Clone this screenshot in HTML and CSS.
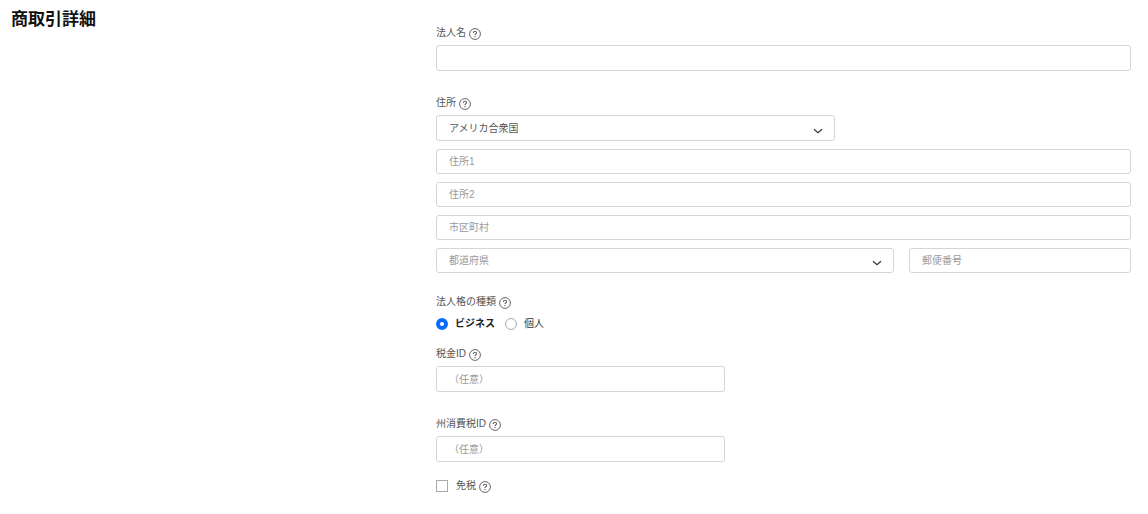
FILE: index.html
```html
<!DOCTYPE html>
<html lang="ja">
<head>
    <meta charset="UTF-8">
    <meta name="viewport" content="width=device-width, initial-scale=1.0">
    <title>商取引詳細</title>
    <link rel="stylesheet" href="styles.css">
</head>
<body>
    <!-- Shared icons -->
    <svg class="sprite" aria-hidden="true">
        <symbol id="icon-help" viewBox="0 0 12 12">
            <circle cx="6" cy="6" r="5.4" fill="none" stroke="currentColor" stroke-width="1"/>
            <path d="M4.4 4.9C4.4 3.8 5.1 3.3 6 3.3S7.6 3.8 7.6 4.7C7.6 5.7 6 5.7 6 7" fill="none" stroke="currentColor" stroke-width="1.1"/>
            <circle cx="6" cy="8.5" r="0.7" fill="currentColor"/>
        </symbol>
        <symbol id="icon-chevron" viewBox="0 0 10 6">
            <path d="M1 1.2L5 4.6L9 1.2" fill="none" stroke="currentColor" stroke-width="1.2"/>
        </symbol>
    </svg>

    <main class="page">
        <h1 class="page-title">商取引詳細</h1>

        <form class="details-form">
            <div class="field">
                <div class="label-row">
                    <label for="legalName">法人名</label>
                    <button type="button" class="help" aria-label="法人名のヘルプ"><svg><use href="#icon-help"/></svg></button>
                </div>
                <input type="text" id="legalName" class="control">
            </div>

            <div class="field">
                <div class="label-row">
                    <label for="country">住所</label>
                    <button type="button" class="help" aria-label="住所のヘルプ"><svg><use href="#icon-help"/></svg></button>
                </div>
                <div class="address">
                    <div class="select-wrap country">
                        <select id="country" class="control">
                            <option>アメリカ合衆国</option>
                        </select>
                        <svg class="chevron"><use href="#icon-chevron"/></svg>
                    </div>
                    <input type="text" class="control" placeholder="住所1" aria-label="住所1">
                    <input type="text" class="control" placeholder="住所2" aria-label="住所2">
                    <input type="text" class="control" placeholder="市区町村" aria-label="市区町村">
                    <div class="region-row">
                        <div class="select-wrap">
                            <select class="control empty" aria-label="都道府県">
                                <option>都道府県</option>
                            </select>
                            <svg class="chevron"><use href="#icon-chevron"/></svg>
                        </div>
                        <input type="text" class="control" placeholder="郵便番号" aria-label="郵便番号">
                    </div>
                </div>
            </div>

            <div class="field entity" role="radiogroup" aria-labelledby="entityLabel">
                <div class="label-row">
                    <span id="entityLabel">法人格の種類</span>
                    <button type="button" class="help" aria-label="法人格の種類のヘルプ"><svg><use href="#icon-help"/></svg></button>
                </div>
                <div class="radio-row">
                    <input type="radio" id="business" name="entity" checked>
                    <label for="business">ビジネス</label>
                    <input type="radio" id="individual" name="entity">
                    <label for="individual">個人</label>
                </div>
            </div>

            <div class="field">
                <div class="label-row">
                    <label for="taxId">税金ID</label>
                    <button type="button" class="help" aria-label="税金IDのヘルプ"><svg><use href="#icon-help"/></svg></button>
                </div>
                <input type="text" id="taxId" class="control short" placeholder="（任意）">
            </div>

            <div class="field">
                <div class="label-row">
                    <label for="stateTaxId">州消費税ID</label>
                    <button type="button" class="help" aria-label="州消費税IDのヘルプ"><svg><use href="#icon-help"/></svg></button>
                </div>
                <input type="text" id="stateTaxId" class="control short" placeholder="（任意）">
            </div>

            <div class="check-row">
                <input type="checkbox" id="taxExempt">
                <label for="taxExempt">免税</label>
                <button type="button" class="help" aria-label="免税のヘルプ"><svg><use href="#icon-help"/></svg></button>
            </div>
        </form>
    </main>
</body>
</html>
```

FILE: styles.css
```css
* {
    margin: 0;
    padding: 0;
    box-sizing: border-box;
}

body {
    font-family: "Liberation Sans", "Noto Sans CJK JP", sans-serif;
    font-size: 10px;
    line-height: 14px;
    color: #555;
    background: #fff;
}

.sprite {
    display: none;
}

.page {
    display: grid;
    grid-template-columns: 425fr 695fr;
    padding: 8px 17px 20px 11px;
}

.page-title {
    font-size: 17px;
    line-height: 24px;
    font-weight: bold;
    color: #111;
}

.details-form {
    padding-top: 18px;
}

.field {
    margin-bottom: 25px;
}

.label-row {
    display: flex;
    align-items: center;
    gap: 3px;
    margin-bottom: 5px;
}

.help {
    width: 12px;
    height: 12px;
    margin-top: 2px;
    border: none;
    background: none;
    color: #666;
    cursor: pointer;
}

.help svg {
    display: block;
    width: 12px;
    height: 12px;
}

.control {
    display: block;
    width: 100%;
    height: 26px;
    padding: 0 12px;
    border: 1px solid #d5d5d5;
    border-radius: 3px;
    background: #fff;
    color: #555;
    font-family: inherit;
    font-size: 10px;
    appearance: none;
}

.control::placeholder {
    color: #999;
    opacity: 1;
}

.control.empty {
    color: #999;
}

.control:focus {
    outline: none;
    border-color: #0a6cff;
}

.control.short {
    width: 41.6%;
}

.address {
    display: flex;
    flex-direction: column;
    gap: 8px;
}

.address .control {
    height: 25px;
}

.address .country .control {
    height: 26px;
}

.select-wrap {
    position: relative;
}

.country {
    width: 57.4%;
}

.chevron {
    position: absolute;
    right: 12px;
    bottom: 7px;
    width: 10px;
    height: 6px;
    color: #333;
    pointer-events: none;
}

.region-row {
    display: grid;
    grid-template-columns: 458fr 222fr;
    gap: 15px;
}

.entity {
    margin-top: -3px;
    margin-bottom: 16px;
}

.radio-row {
    display: flex;
    align-items: center;
    padding-top: 3px;
}

.radio-row input {
    width: 12px;
    height: 12px;
    border: 1px solid #aaa;
    border-radius: 50%;
    appearance: none;
}

.radio-row input:checked {
    border: 4px solid #0a6cff;
}

.radio-row label {
    margin-left: 7px;
    margin-right: 10px;
    color: #333;
}

.radio-row input:checked + label {
    font-weight: bold;
    color: #222;
}

.check-row {
    display: flex;
    align-items: center;
    margin-top: -8px;
}

.check-row input {
    width: 12px;
    height: 12px;
    border: 1px solid #aaa;
    appearance: none;
}

.check-row label {
    margin-left: 8px;
    margin-right: 3px;
}
```
